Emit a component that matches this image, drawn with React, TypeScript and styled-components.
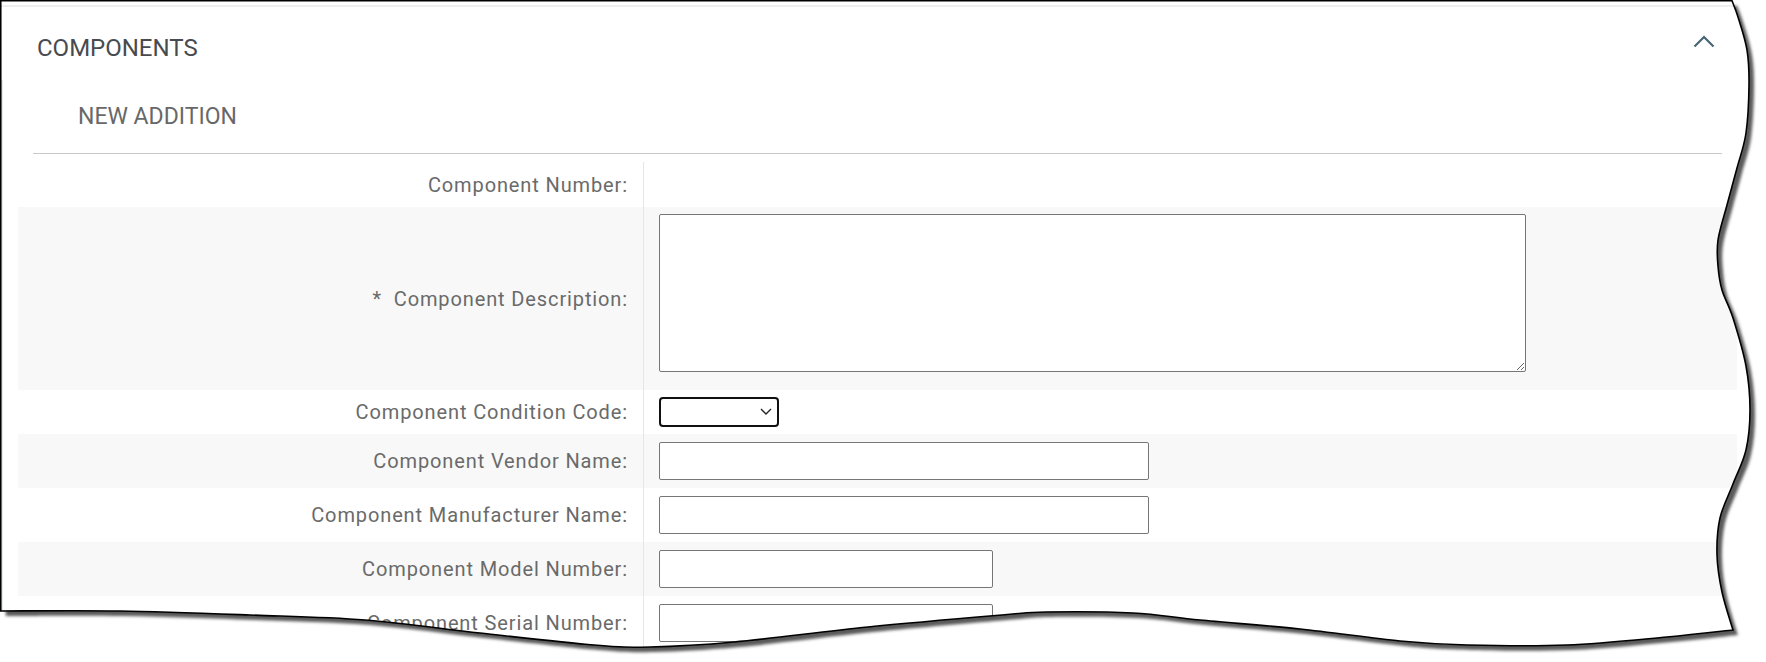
import React from "react";
import styled, { createGlobalStyle } from "styled-components";

const GlobalStyle = createGlobalStyle`
  html,
  body {
    margin: 0;
    padding: 0;
    background: #fff;
  }
  body {
    font-family: Roboto, "Liberation Sans", Arial, sans-serif;
  }
`;

const Page = styled.div`
  position: relative;
  width: 1766px;
  height: 662px;
  overflow: hidden;
  background: #fff;
`;

const Card = styled.section`
  margin-top: 5px;
  padding-top: 29px;
  border-top: 2px solid #efefef;
`;

const Header = styled.header`
  display: flex;
  justify-content: space-between;
  align-items: flex-start;
  padding: 0 51px 0 37px;
`;

const Title = styled.h2`
  margin: 0;
  font-size: 24px;
  line-height: 24px;
  font-weight: 400;
  color: #474b50;
`;

const Toggle = styled.button`
  display: flex;
  margin-top: -1px;
  padding: 0;
  border: 0;
  background: none;
  color: #4a6575;
  cursor: pointer;
`;

const Body = styled.div`
  margin: 20px 0 0 1px;
  border-left: 2px solid #e6ecec;
`;

const SubTitle = styled.h3`
  margin: 0 0 0 75px;
  padding-top: 25px;
  font-size: 23px;
  line-height: 23px;
  font-weight: 400;
  color: #686868;
`;

const Rule = styled.hr`
  margin: 25px 44px 0 30px;
  height: 1px;
  border: 0;
  background: #c9c9c9;
`;

const Form = styled.div`
  margin: 8px 29px 0 15px;
`;

const Row = styled.div<{ $height: number }>`
  display: grid;
  grid-template-columns: 625px 1fr;
  height: ${(p) => p.$height}px;

  &:nth-child(even) {
    background: #f8f8f8;
  }
`;

const Label = styled.label`
  display: flex;
  align-items: center;
  justify-content: flex-end;
  padding-right: 15px;
  font-size: 20px;
  letter-spacing: 0.88px;
  color: #6a6a6a;
  white-space: pre;
`;

const Field = styled.div<{ $top?: boolean }>`
  display: flex;
  align-items: ${(p) => (p.$top ? "flex-start" : "center")};
  padding: ${(p) => (p.$top ? "7px" : "0")} 0 0 15px;
  border-left: 1px solid #e2e7e7;
`;

const TextArea = styled.textarea`
  box-sizing: border-box;
  width: 867px;
  height: 158px;
  margin: 0;
  padding: 2px;
  border: 1px solid #767676;
  border-radius: 2px;
  background: #fff;
  font: inherit;
`;

const TextInput = styled.input<{ $width: number }>`
  box-sizing: border-box;
  width: ${(p) => p.$width}px;
  height: 38px;
  margin: 0;
  padding: 0 6px;
  border: 1px solid #767676;
  border-radius: 2px;
  background: #fff;
  font: inherit;
`;

const SelectBox = styled.div`
  position: relative;
  box-sizing: border-box;
  width: 120px;
  height: 30px;
  border: 2px solid #111;
  border-radius: 4px;
  background: #fff;
`;

const Select = styled.select`
  width: 100%;
  height: 100%;
  border: 0;
  background: transparent;
  appearance: none;
  outline: none;
`;

const SelectArrow = styled.svg`
  position: absolute;
  top: 9px;
  right: 5px;
  pointer-events: none;
`;

const Tear = styled.svg`
  position: absolute;
  inset: 0;
  pointer-events: none;
`;

type Pt = [number, number];

const rightEdge: Pt[] = [
  [1732, 0.75], [1738, 17], [1747, 50], [1749, 85], [1746, 133], [1737, 168],
  [1727, 205], [1718, 240], [1718, 266], [1722, 290], [1733, 318], [1746, 366],
  [1750, 410], [1746, 450], [1733, 484], [1720, 518], [1717, 555], [1722, 592],
  [1733, 630],
];

const bottomEdge: Pt[] = [
  [1733, 630], [1667, 637], [1567, 645], [1467, 645], [1400, 641], [1300, 629],
  [1200, 620], [1133, 613], [1046, 612], [1002, 615], [868, 627], [734, 642],
  [650, 647], [594, 645], [480, 633], [365, 620], [250, 615], [120, 611],
  [0.75, 611],
];

const curve = (pts: Pt[]) => {
  let d = "";
  for (let i = 0; i < pts.length - 1; i++) {
    const p0 = pts[i - 1] || pts[i];
    const p1 = pts[i];
    const p2 = pts[i + 1];
    const p3 = pts[i + 2] || p2;
    const c1 = [p1[0] + (p2[0] - p0[0]) / 6, p1[1] + (p2[1] - p0[1]) / 6];
    const c2 = [p2[0] - (p3[0] - p1[0]) / 6, p2[1] - (p3[1] - p1[1]) / 6];
    d += ` C ${c1[0]} ${c1[1]} ${c2[0]} ${c2[1]} ${p2[0]} ${p2[1]}`;
  }
  return d;
};

const shape = `M 0.75 0.75 L 1732 0.75${curve(rightEdge)}${curve(bottomEdge)} Z`;

const TornEdge = () => (
  <Tear width="1766" height="662" viewBox="0 0 1766 662">
    <defs>
      <filter id="soft" x="-5%" y="-5%" width="110%" height="110%">
        <feGaussianBlur stdDeviation="1.6" />
      </filter>
      <mask id="outside">
        <rect width="1766" height="662" fill="#fff" />
        <path d={shape} fill="#000" />
      </mask>
    </defs>
    <g mask="url(#outside)">
      <rect width="1766" height="662" fill="#fff" />
      <path d={shape} transform="translate(5 5)" fill="#5a5a5a" filter="url(#soft)" />
    </g>
    <path d={shape} fill="none" stroke="#000" strokeWidth="1.6" />
  </Tear>
);

const fields = [
  { label: "Component Vendor Name:", width: 490 },
  { label: "Component Manufacturer Name:", width: 490 },
  { label: "Component Model Number:", width: 334 },
  { label: "Component Serial Number:", width: 334 },
];

export default function App() {
  return (
    <>
      <GlobalStyle />
      <Page>
        <Card>
          <Header>
            <Title>COMPONENTS</Title>
            <Toggle aria-label="Collapse">
              <svg width="22" height="13" viewBox="0 0 22 13" fill="none">
                <polyline
                  points="1.5,11.5 11,2 20.5,11.5"
                  stroke="currentColor"
                  strokeWidth="2.2"
                />
              </svg>
            </Toggle>
          </Header>
          <Body>
            <SubTitle>NEW ADDITION</SubTitle>
            <Rule />
            <Form>
              <Row $height={45}>
                <Label>Component Number:</Label>
                <Field />
              </Row>
              <Row $height={183}>
                <Label>{"*  Component Description:"}</Label>
                <Field $top>
                  <TextArea />
                </Field>
              </Row>
              <Row $height={44}>
                <Label>Component Condition Code:</Label>
                <Field>
                  <SelectBox>
                    <Select defaultValue="">
                      <option value="" />
                    </Select>
                    <SelectArrow width="12" height="7" viewBox="0 0 12 7" fill="none">
                      <polyline points="1,1 6,6 11,1" stroke="#222" strokeWidth="1.4" />
                    </SelectArrow>
                  </SelectBox>
                </Field>
              </Row>
              {fields.map((f) => (
                <Row key={f.label} $height={54}>
                  <Label>{f.label}</Label>
                  <Field>
                    <TextInput $width={f.width} />
                  </Field>
                </Row>
              ))}
            </Form>
          </Body>
        </Card>
        <TornEdge />
      </Page>
    </>
  );
}
